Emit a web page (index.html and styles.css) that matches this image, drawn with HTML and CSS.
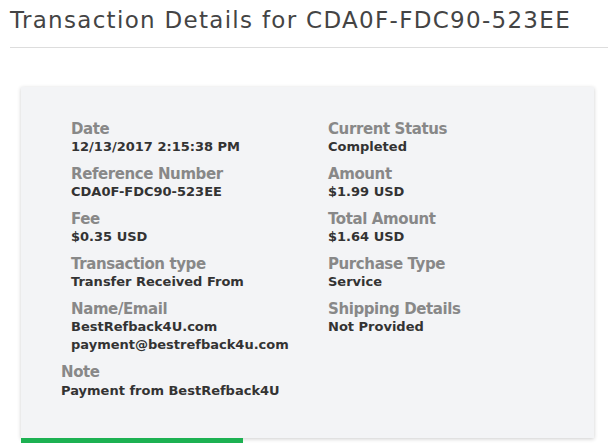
FILE: index.html
```html
<!DOCTYPE html>
<html lang="en">
<head>
    <meta charset="UTF-8">
    <meta name="viewport" content="width=device-width, initial-scale=1.0">
    <title>Transaction Details</title>
    <link rel="stylesheet" href="styles.css">
</head>
<body>
<div class="page">
    <h1 class="page-title">Transaction Details for CDA0F-FDC90-523EE</h1>
    <hr class="divider">

    <!-- Transaction summary card -->
    <div class="card">
        <div class="fields">
            <div class="field">
                <div class="label">Date</div>
                <div class="value">12/13/2017 2:15:38 PM</div>
            </div>
            <div class="field">
                <div class="label">Current Status</div>
                <div class="value">Completed</div>
            </div>
            <div class="field">
                <div class="label">Reference Number</div>
                <div class="value">CDA0F-FDC90-523EE</div>
            </div>
            <div class="field">
                <div class="label">Amount</div>
                <div class="value">$1.99 USD</div>
            </div>
            <div class="field">
                <div class="label">Fee</div>
                <div class="value">$0.35 USD</div>
            </div>
            <div class="field">
                <div class="label">Total Amount</div>
                <div class="value">$1.64 USD</div>
            </div>
            <div class="field">
                <div class="label">Transaction type</div>
                <div class="value">Transfer Received From</div>
            </div>
            <div class="field">
                <div class="label">Purchase Type</div>
                <div class="value">Service</div>
            </div>
            <div class="field">
                <div class="label">Name/Email</div>
                <div class="value">BestRefback4U.com</div>
                <div class="value">payment@bestrefback4u.com</div>
            </div>
            <div class="field">
                <div class="label">Shipping Details</div>
                <div class="value">Not Provided</div>
            </div>
        </div>

        <div class="note">
            <div class="label">Note</div>
            <div class="value">Payment from BestRefback4U</div>
        </div>
    </div>

    <!-- Action bar below the card (only its top edge is in view) -->
    <button class="btn-back" type="button" aria-label="Back to Transactions"></button>
</div>
</body>
</html>
```

FILE: styles.css
```css
body {
    margin: 0;
    font-family: 'DejaVu Sans', sans-serif;
    background: #fff;
    color: #333;
}

.page {
    padding: 0 0 0 10px;
}

.page-title {
    margin: 0;
    padding-top: 6px;
    font-size: 23px;
    font-weight: 400;
    line-height: 28px;
    letter-spacing: 1.3px;
    color: #444;
}

.divider {
    margin: 13px 0 0 0;
    border: none;
    border-top: 1px solid #ddd;
}

.card {
    margin: 39px 14px 0 11px;
    padding: 33px 0 38px 0;
    background: #f3f4f6;
    box-shadow: 0 1px 4px rgba(0, 0, 0, 0.2);
}

.fields {
    display: grid;
    grid-template-columns: 257px 1fr;
    padding-left: 50px;
}

.field {
    margin-bottom: 9px;
}

.label {
    font-size: 15px;
    font-weight: 600;
    line-height: 18px;
    letter-spacing: -0.4px;
    color: #888;
}

.value {
    font-size: 13px;
    font-weight: 700;
    line-height: 18px;
    color: #333;
}

.note {
    padding-left: 40px;
}

.note .value {
    margin-top: 1px;
}

.btn-back {
    display: block;
    margin-left: 11px;
    width: 222px;
    height: 40px;
    border: none;
    background: #1db152;
    cursor: pointer;
}
```
